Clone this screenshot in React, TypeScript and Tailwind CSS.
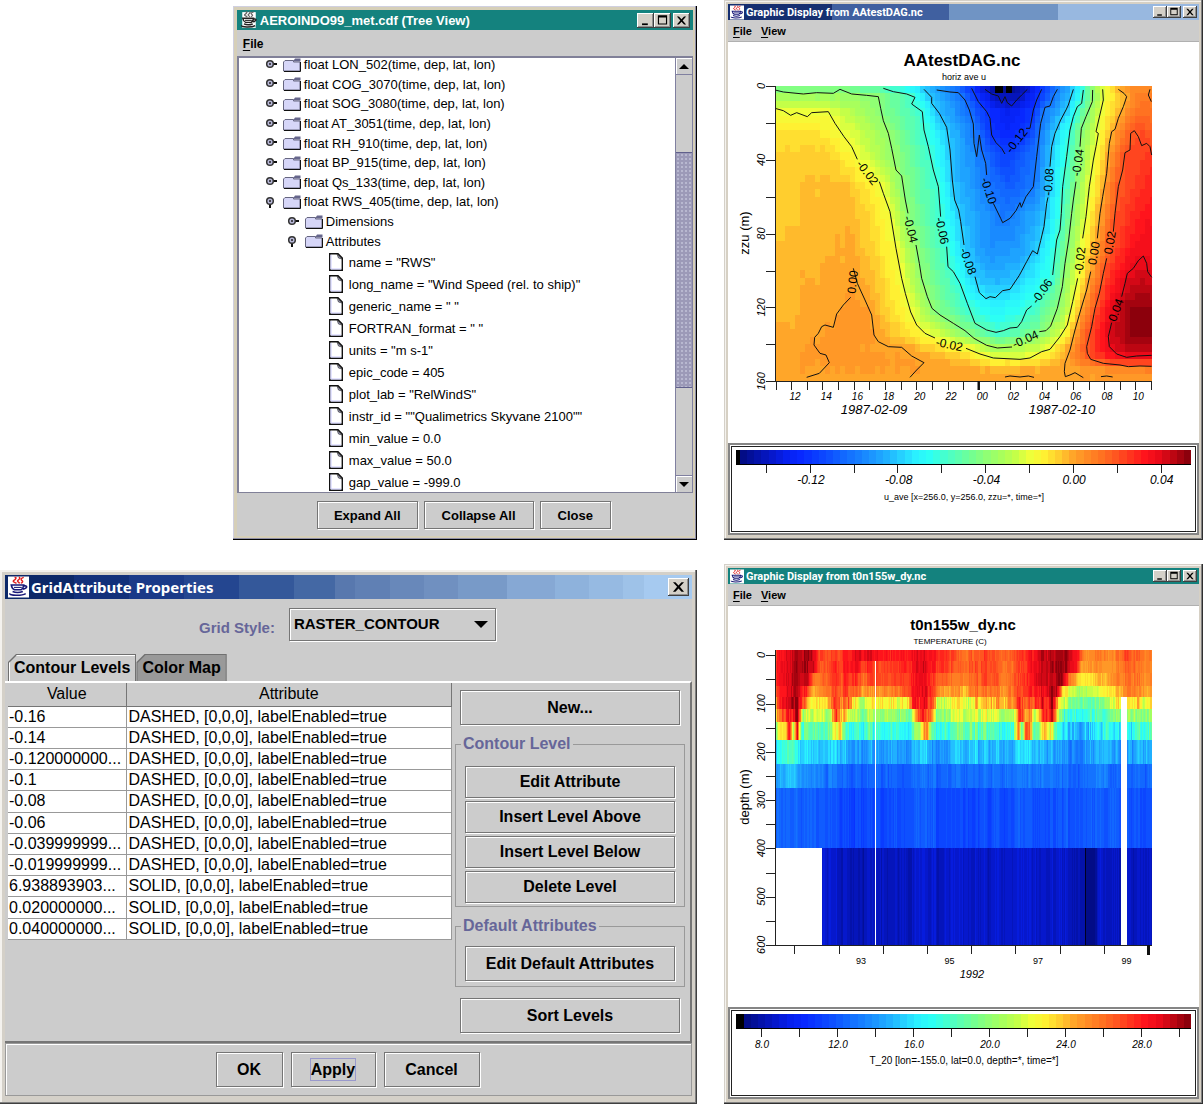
import type { ReactNode } from "react";

type Knot = [number, number];

interface Band {
    top: number,
    bottom: number,
    noise: number,
    knots: Knot[]
}

const BASE_COLORS = [
    "#020c86", "#0412aa", "#0618cc", "#0620ee", "#0828ff", "#0a3cff", "#0e50ff", "#1268ff",
    "#167eff", "#1c96ff", "#20b0ff", "#26d0ff", "#2af0ff", "#2cfff4", "#44ffd0", "#5cffb0",
    "#74ff90", "#90ff74", "#a8ff5c", "#c4ff48", "#eeff3a", "#fff032", "#ffce2e", "#ffa629",
    "#ff8a25", "#ff7221", "#ff5620", "#ff341e", "#ff141c", "#ea0a19", "#bc0612", "#8c000c",
];

function mix(a: string, b: string): string {
    const parts = [1, 3, 5].map((i) => Math.round((parseInt(a.slice(i, i + 2), 16) + parseInt(b.slice(i, i + 2), 16)) / 2));
    return `rgb(${parts.join(",")})`;
}

const PALETTE = BASE_COLORS.flatMap((c, i) => (i < BASE_COLORS.length - 1 ? [c, mix(c, BASE_COLORS[i + 1])] : [c]));

// velocity section: depth of the profile, then [x, u] pairs across it
const VELOCITY: { y: number, knots: Knot[] }[] = [
    { y: 258, knots: [[165, -.047], [360, -.045], [490, -.058], [612, -.08], [700, -.1], [755, -.12], [795, -.14], [820, -.15], [870, -.15], [922, -.14], [965, -.12], [1012, -.1], [1060, -.08], [1090, -.06], [1118, -.04], [1148, -.02], [1195, 0], [1240, .008], [1295, .006]] },
    { y: 290, knots: [[165, -.034], [330, -.034], [475, -.04], [560, -.055], [630, -.08], [725, -.1], [768, -.12], [830, -.14], [855, -.142], [900, -.14], [955, -.12], [1000, -.1], [1050, -.08], [1086, -.06], [1117, -.04], [1152, -.02], [1220, 0], [1260, .012], [1295, .01]] },
    { y: 335, knots: [[165, -.018], [325, -.02], [480, -.04], [607, -.06], [650, -.08], [745, -.1], [800, -.12], [860, -.13], [940, -.12], [970, -.1], [1037, -.08], [1070, -.06], [1105, -.04], [1142, -.02], [1202, 0], [1250, .014], [1295, .012]] },
    { y: 400, knots: [[165, -.011], [290, -.01], [365, -.018], [500, -.036], [615, -.06], [685, -.08], [768, -.1], [815, -.12], [860, -.124], [915, -.12], [958, -.1], [1003, -.08], [1050, -.06], [1083, -.04], [1133, -.02], [1178, 0], [1235, .02], [1270, .022], [1295, .018]] },
    { y: 470, knots: [[165, -.007], [320, -.006], [410, -.018], [525, -.038], [632, -.06], [693, -.08], [790, -.1], [853, -.117], [950, -.1], [992, -.08], [1040, -.06], [1078, -.04], [1121, -.02], [1165, 0], [1213, .022], [1295, .026]] },
    { y: 560, knots: [[165, -.006], [370, -.003], [485, -.018], [550, -.04], [655, -.06], [698, -.08], [808, -.1], [860, -.108], [940, -.1], [987, -.08], [1030, -.06], [1068, -.04], [1108, -.02], [1152, 0], [1195, .02], [1295, .03]] },
    { y: 650, knots: [[165, -.006], [380, -.002], [440, -.008], [512, -.018], [563, -.04], [661, -.06], [721, -.08], [850, -.1], [980, -.08], [1020, -.06], [1055, -.04], [1099, -.02], [1138, 0], [1184, .02], [1270, .034], [1295, .033]] },
    { y: 740, knots: [[165, -.005], [395, -.001], [460, -.008], [530, -.018], [590, -.04], [680, -.06], [735, -.08], [800, -.093], [900, -.09], [950, -.08], [1008, -.06], [1045, -.04], [1085, -.02], [1125, 0], [1170, .02], [1260, .037], [1295, .036]] },
    { y: 830, knots: [[165, -.004], [300, -.001], [400, .001], [480, -.007], [545, -.018], [603, -.038], [705, -.06], [765, -.08], [830, -.086], [900, -.08], [998, -.06], [1030, -.04], [1072, -.02], [1108, 0], [1148, .02], [1215, .04], [1260, .044], [1295, .04]] },
    { y: 930, knots: [[165, -.003], [350, .001], [400, .004], [450, .001], [570, -.018], [640, -.04], [750, -.06], [830, -.07], [930, -.06], [1012, -.04], [1055, -.02], [1085, 0], [1124, .02], [1178, .04], [1230, .052], [1295, .052]] },
    { y: 1000, knots: [[165, -.002], [285, .001], [400, .004], [465, .002], [620, -.018], [740, -.04], [830, -.058], [960, -.042], [1030, -.02], [1060, 0], [1105, .02], [1165, .04], [1230, .052], [1295, .052]] },
    { y: 1040, knots: [[165, -.001], [300, .003], [540, .001], [740, -.018], [835, -.036], [980, -.022], [1045, 0], [1098, .02], [1170, .038], [1220, .048], [1295, .048]] },
    { y: 1075, knots: [[165, 0], [310, .003], [590, .002], [740, -.006], [820, -.018], [930, -.018], [1035, 0], [1110, .02], [1190, .035], [1295, .035]] },
    { y: 1105, knots: [[165, 0], [320, .002], [580, .002], [830, -.003], [1035, 0], [1200, .008], [1295, .01]] },
    { y: 1143, knots: [[165, 0], [1295, .002]] },
];

const CONTOURS = [
    // -0.04
    "165,270 190,276 250,282 290,278 340,280 360,268 395,282 440,286 475,290 482,325 490,362 505,400 515,445 528,510 545,528 556,600 564,640",
    "588,735 598,790 605,835 622,890 636,925 660,945 700,970 735,992 762,1015 800,1036 832,1044 876,1041",
    "958,995 978,992 992,978 1012,925 1027,860 1035,790 1046,720 1055,640 1060,600 1068,545",
    "1080,440 1084,385 1098,350 1117,305 1118,270",
    // -0.02
    "165,325 190,332 212,346 230,338 262,350 275,338 325,335 345,370 372,410 395,440 412,478",
    "478,545 490,580 510,635 528,745 545,835 556,880 572,936 590,975 615,1000 645,1014",
    "738,1045 780,1062 820,1074 900,1078 930,1074 965,1055 990,1048 1020,1010 1042,975 1058,905 1073,835",
    "1088,715 1098,650 1108,560 1120,480 1128,440 1135,400 1128,395 1150,300 1148,268",
    // -0.06
    "490,265 520,275 560,282 585,292 575,312 607,335 612,390 625,440 640,510 655,560 662,650",
    "680,740 684,800 700,815 720,850 742,910 765,970 800,990 828,997 850,992 870,984 892,982 905,965 920,930 935,918",
    "998,825 1003,780 1010,720 1020,690 1024,640 1028,560 1040,470 1050,390 1060,350 1072,320 1085,310 1090,270",
    // -0.08
    "612,268 635,292 635,310 658,340 680,382 690,450 697,540 704,600 716,630 722,665 732,735",
    "765,830 778,878 798,896 810,890 826,893 848,872 870,868 898,826 920,785 938,752 952,762 962,722 972,680 980,610 984,592",
    "990,500 995,440 1005,400 1022,360 1038,330 1045,315 1060,268",
    // -0.10
    "650,270 690,276 715,278 735,300 748,330 760,372 762,430 770,470 778,405 785,450 797,490 800,525",
    "820,610 842,655 848,668 870,655 888,632 900,608 904,622 918,590 940,560 950,470 962,370 975,322 990,318 1000,290 1012,268",
    // -0.12
    "755,265 775,305 800,335 810,355 815,405 828,428 845,445 855,462",
    "918,385 930,385 940,330 950,300 965,268",
    // -0.14
    "795,268 815,282 835,288 845,310 855,290 862,308 875,318 890,300 905,285 922,268",
    // 0.00
    "1195,268 1212,280 1220,290 1210,320 1195,355 1185,388 1175,395 1168,430 1160,520 1148,590 1140,640 1132,715",
    "1112,815 1100,870 1082,930 1065,990 1050,1050 1035,1090 1033,1115 1036,1130 1050,1125 1065,1118 1090,1133",
    "260,1132 298,1120 328,1088 318,1065 300,1060 282,1035 284,1012 295,1000 305,980 315,975 340,982 350,942 370,915 392,892",
    "400,805 412,850 435,900 455,945 462,1005 475,1025 505,1040 545,1042 575,1068 612,1088 590,1110 570,1132",
    "855,1131 870,1128 900,1131 925,1128 942,1132",
    "1143,1130 1160,1128 1178,1131",
    // 0.02
    "1295,465 1290,440 1280,430 1265,437 1255,410 1243,392 1232,400 1230,450 1215,458 1208,510 1195,560 1185,640 1180,695",
    "1160,775 1150,820 1138,880 1125,925 1115,980 1100,1040 1102,1060 1112,1078 1150,1090 1200,1095 1225,1100 1260,1098 1295,1099",
    "1290,268 1285,285 1294,305",
    // 0.04
    "1295,832 1283,815 1280,790 1270,768 1255,782 1240,805 1222,820 1215,850 1205,890",
    "1175,968 1165,1010 1168,1040 1190,1062 1220,1072 1250,1068 1295,1066",
];

const CONTOUR_LABELS: { x: number, y: number, angle: number, text: string }[] = [
    { x: 442, y: 518, angle: 52, text: "-0.02" },
    { x: 890, y: 422, angle: -52, text: "-0.12" },
    { x: 806, y: 572, angle: 72, text: "-0.10" },
    { x: 986, y: 546, angle: -86, text: "-0.08" },
    { x: 1074, y: 488, angle: -82, text: "-0.04" },
    { x: 572, y: 688, angle: 76, text: "-0.04" },
    { x: 666, y: 692, angle: 78, text: "-0.06" },
    { x: 744, y: 784, angle: 70, text: "-0.08" },
    { x: 398, y: 846, angle: -84, text: "0.00" },
    { x: 688, y: 1034, angle: 12, text: "-0.02" },
    { x: 916, y: 1018, angle: -24, text: "-0.04" },
    { x: 966, y: 874, angle: -55, text: "-0.06" },
    { x: 1080, y: 782, angle: -84, text: "-0.02" },
    { x: 1122, y: 760, angle: -80, text: "0.00" },
    { x: 1170, y: 728, angle: -80, text: "0.02" },
    { x: 1188, y: 930, angle: -70, text: "0.04" },
];

const TEMPERATURE: Band[] = [
    { top: 270, bottom: 303, noise: .9, knots: [[165, 27.5], [205, 28.5], [235, 30], [275, 29.5], [300, 27], [350, 27], [405, 29], [440, 28.5], [520, 28], [600, 28.8], [690, 27.5], [720, 26], [800, 27.3], [860, 26.3], [930, 28], [960, 29.5], [1040, 30.2], [1075, 28], [1095, 25.2], [1180, 25.5], [1215, 27], [1295, 25.5]] },
    { top: 303, bottom: 340, noise: .9, knots: [[165, 27.5], [235, 30], [280, 29], [300, 26.5], [340, 27], [405, 28.8], [430, 27.5], [480, 27], [560, 28], [610, 28.7], [680, 27.5], [710, 26], [800, 27.2], [860, 26], [920, 27.5], [960, 29.5], [1035, 30.2], [1070, 28.5], [1085, 24.8], [1180, 25], [1215, 26.5], [1295, 25.3]] },
    { top: 340, bottom: 377, noise: .9, knots: [[165, 27.5], [235, 30], [265, 29], [285, 25.2], [340, 27], [400, 28], [430, 26], [460, 27], [560, 27.5], [610, 28.5], [650, 27], [710, 25.2], [800, 27], [860, 25.8], [920, 27.5], [955, 29.3], [1030, 30], [1045, 26.5], [1075, 23.6], [1095, 22.8], [1160, 24.5], [1215, 26], [1295, 25]] },
    { top: 377, bottom: 411, noise: 1.2, knots: [[165, 27], [235, 30], [260, 27], [280, 23.8], [340, 26.5], [400, 27], [430, 24.5], [520, 25.7], [570, 28], [620, 28.5], [660, 25], [720, 24], [780, 25.8], [860, 25.5], [925, 27.5], [965, 29], [1010, 30], [1030, 23], [1080, 20.8], [1130, 21.6], [1180, 23.5], [1215, 25.8], [1295, 24.6]] },
    { top: 411, bottom: 447, noise: 2, knots: [[165, 25.5], [190, 28], [230, 30], [250, 27], [265, 22], [320, 23], [350, 27], [390, 26], [420, 20.5], [460, 22.8], [560, 23], [580, 28], [635, 27.5], [655, 22], [740, 22], [800, 24.2], [880, 25], [900, 27], [930, 26.5], [960, 28], [1000, 30], [1020, 22], [1060, 19.5], [1130, 19], [1180, 22.5], [1200, 23.5], [1295, 22.8]] },
    { top: 447, bottom: 485, noise: 2.2, knots: [[165, 23.5], [200, 27], [235, 29.5], [250, 20.5], [330, 21], [350, 26.5], [380, 22.6], [420, 19.5], [480, 20.5], [570, 20.5], [600, 26.5], [630, 26], [650, 20], [760, 22], [860, 21], [885, 22], [900, 27.5], [950, 21], [975, 29], [1000, 29], [1020, 19], [1060, 17.5], [1140, 18], [1180, 20], [1295, 20.5]] },
    { top: 485, bottom: 540, noise: 2.2, knots: [[165, 20], [190, 22.5], [210, 27], [220, 20], [232, 28], [245, 18], [330, 18.5], [350, 22], [362, 26], [372, 18], [500, 17], [580, 18], [600, 21], [622, 25], [635, 17.5], [760, 19], [880, 17.5], [897, 26], [905, 18], [920, 28], [945, 18], [975, 25], [1000, 22], [1015, 17], [1050, 15], [1140, 15.5], [1160, 19], [1175, 16], [1295, 18]] },
    { top: 540, bottom: 611, noise: 1.3, knots: [[165, 15.5], [210, 18], [240, 16], [300, 15], [360, 16], [400, 13.8], [620, 15], [640, 13.8], [760, 15.5], [860, 14.5], [920, 16.2], [1000, 14.5], [1080, 13.2], [1160, 15.6], [1200, 14], [1295, 15.2]] },
    { top: 611, bottom: 684, noise: .8, knots: [[165, 14], [215, 15.2], [250, 13.5], [400, 12.3], [600, 12.4], [750, 12.6], [900, 13], [970, 13.2], [1080, 12.4], [1160, 13.5], [1170, 12.3], [1295, 12.8]] },
    { top: 684, bottom: 864, noise: .7, knots: [[165, 12.2], [220, 12.4], [400, 11.2], [620, 12], [700, 11.3], [890, 11.8], [1000, 11.8], [1160, 12.2], [1295, 11.5]] },
    { top: 864, bottom: 1155, noise: .6, knots: [[165, 8.6], [306, 8.9], [420, 8.2], [520, 8.5], [700, 8.7], [1000, 8.8], [1080, 8.4], [1097, 8], [1100, 7.2], [1130, 7.2], [1134, 8.7], [1295, 8.6]] },
];

const VARIABLES = ["LON_502", "COG_3070", "SOG_3080", "AT_3051", "RH_910", "BP_915", "Qs_133"];

const ATTRIBUTES = [
    'name = "RWS"',
    'long_name = "Wind Speed (rel. to ship)"',
    'generic_name = " "',
    'FORTRAN_format = " "',
    'units = "m s-1"',
    "epic_code = 405",
    'plot_lab = "RelWindS"',
    'instr_id = ""Qualimetrics Skyvane 2100""',
    "min_value = 0.0",
    "max_value = 50.0",
    "gap_value = -999.0",
];

const LEVELS = [
    ["-0.16", "DASHED"],
    ["-0.14", "DASHED"],
    ["-0.120000000...", "DASHED"],
    ["-0.1", "DASHED"],
    ["-0.08", "DASHED"],
    ["-0.06", "DASHED"],
    ["-0.039999999...", "DASHED"],
    ["-0.019999999...", "DASHED"],
    ["6.938893903...", "SOLID"],
    ["0.020000000...", "SOLID"],
    ["0.040000000...", "SOLID"],
];

function sample(knots: Knot[], x: number): number {
    for (let i = 1; i < knots.length; i++) {
        const [x0, v0] = knots[i - 1];
        const [x1, v1] = knots[i];
        if (x <= x1) return v0 + (v1 - v0) * Math.max(0, (x - x0) / (x1 - x0));
    }
    return knots[knots.length - 1][1];
}

function jitter(a: number, b: number): number {
    const n = Math.sin(a * 12.9898 + b * 78.233) * 43758.5453;
    return (n - Math.floor(n)) * 2 - 1;
}

function color(value: number, min: number, max: number): string {
    const i = Math.floor(((value - min) / (max - min)) * PALETTE.length);
    return PALETTE[Math.min(PALETTE.length - 1, Math.max(0, i))];
}

// one raster line, with neighbouring cells of the same colour joined
function rasterRow(y: number, height: number, step: number, pick: (x: number) => string): ReactNode[] {
    const cells: ReactNode[] = [];
    let start = 165;
    let fill = pick(165 + step / 2);
    for (let x = 165 + step; x < 1296; x += step) {
        const next = pick(x + step / 2);
        if (next !== fill) {
            cells.push(<rect key={`${y}-${start}`} x={start} y={y} width={x - start} height={height} fill={fill} />);
            start = x;
            fill = next;
        }
    }
    cells.push(<rect key={`${y}-${start}`} x={start} y={y} width={1296 - start} height={height} fill={fill} />);
    return cells;
}

function velocityAt(x: number, y: number): number {
    let i = 1;
    while (i < VELOCITY.length - 1 && VELOCITY[i].y < y) i++;
    const a = VELOCITY[i - 1];
    const b = VELOCITY[i];
    const t = (y - a.y) / (b.y - a.y);
    return sample(a.knots, x) * (1 - t) + sample(b.knots, x) * t;
}

const range = (n: number) => Array.from({ length: n }, (_, i) => i);

const JavaIcon = ({ className }: { className: string }) => (
    <svg viewBox="0 0 16 16" className={className} aria-hidden="true">
        <rect width="16" height="16" fill="#fff" />
        <path d="M5 .8c2-.6 1 1.400-.5 2.200s1 1.600 2 2.200M8.200.5c1.500.2.5 1.600-.6 2.400s.8 1.400 1.200 2.400M12 .7c-2 .6-2.600 1.600-1.400 2.400s.2 1.500-.8 2" fill="none" stroke="#e02020" strokeWidth="1.100" />
        <path d="M2.500 6.500h9.500c-.3 2-1 3-2 3.600H5C3.500 9.500 2.800 8 2.500 6.500zM12 7.300c3-.8 3.200 1.800-.8 2.300M3.500 11.500c2 .8 5.500.8 7.800 0M1.500 12.800c-1 1.800 9 2 12 .2" fill="none" stroke="#181878" strokeWidth="1.200" />
        <path d="M4.500 8.300h6" stroke="#181878" strokeWidth=".8" />
    </svg>
);

const JavaIconDark = ({ className }: { className: string }) => (
    <svg viewBox="0 0 16 16" className={className} aria-hidden="true">
        <rect x="2" y="1" width="12" height="14" fill="#fff" />
        <path d="M5 .8c2-.6 1 1.400-.5 2.200s1 1.600 2 2.200M8.200.5c1.500.2.5 1.600-.6 2.400s.8 1.400 1.200 2.400M12 .7c-2 .6-2.600 1.600-1.400 2.400s.2 1.500-.8 2" fill="none" stroke="#666" strokeWidth="1.100" />
        <path d="M2.500 6.500h9.500c-.3 2-1 3-2 3.600H5C3.500 9.500 2.800 8 2.500 6.500zM12 7.300c3-.8 3.200 1.800-.8 2.300M3.500 11.500c2 .8 5.500.8 7.800 0M1.500 12.800c-1 1.800 9 2 12 .2" fill="none" stroke="#222" strokeWidth="1.300" />
        <path d="M4.500 8.300h6" stroke="#222" />
    </svg>
);

const GLYPHS = {
    Minimize: "M4 9h5v1.500H4z",
    Maximize: "M3 2h8v8H3zM4 4v5h6V4z",
    Close: "M3 3h1.800L7 5.400 9.200 3H11L8 6.400l3 3.600H9.200L7 7.500 4.800 10H3l3-3.600z",
};

const TitleButton = ({ name, className }: { name: keyof typeof GLYPHS, className: string }) => (
    <button
        aria-label={name}
        className={`${className} shrink-0 bg-[#d4d0c8] shadow-[inset_-1px_-1px_0_#404040,inset_1px_1px_0_#fff,inset_-2px_-2px_0_#909090]`}
    >
        <svg viewBox="0 0 14 13" className="h-full w-full" aria-hidden="true">
            <path d={GLYPHS[name]} fillRule="evenodd" />
        </svg>
    </button>
);

const MetalButton = ({ children, className }: { children: ReactNode, className: string }) => (
    <button className={`${className} border border-[#757575] bg-[#ccc] font-bold leading-none shadow-[inset_1px_1px_0_#fff,1px_1px_0_#fff]`}>
        {children}
    </button>
);

const MenuItem = ({ label }: { label: string }) => (
    <button className="leading-none">
        <span className="underline underline-offset-2">{label[0]}</span>{label.slice(1)}
    </button>
);

const FolderIcon = () => (
    <svg width="18" height="14" viewBox="0 0 18 14" aria-hidden="true" className="shrink-0">
        <path d="M.5 4L2 2.500h8.500V4h6.500v9H.5z" fill="#d6d6f8" stroke="#666680" />
        <path d="M10 3.500L12 .5h5.500v3z" fill="#66668c" />
        <path d="M1 13.500h16.500V4" fill="none" stroke="#111" />
    </svg>
);

const Handle = ({ open }: { open?: boolean }) => (
    <svg width="16" height="16" viewBox="0 0 16 16" aria-hidden="true" className="shrink-0">
        <path d={open ? "M7 9v5" : "M9 7h5"} stroke="#111" strokeWidth="2" />
        <circle cx="7" cy="7" r="3.300" fill="#b8b8d8" stroke="#333" strokeWidth="1.500" />
        <circle cx="7" cy="7" r="1" fill="#222" />
    </svg>
);

const DocIcon = () => (
    <svg width="14" height="18" viewBox="0 0 14 18" aria-hidden="true" className="shrink-0">
        <path d="M.7.700H9L13.300 5v12.300H.7z" fill="#fff" stroke="#111" strokeWidth="1.400" />
        <path d="M2 2v14h10" fill="none" stroke="#ccccff" />
        <path d="M8 1l5 5-3.500-1z" fill="#9999bb" stroke="#333" strokeWidth=".7" />
    </svg>
);

const FolderRow = ({ label, open, nested }: { label: string, open?: boolean, nested?: boolean }) => (
    <li className={`${nested ? "pl-[46px]" : "pl-6"} flex items-center whitespace-nowrap leading-none`}>
        <Handle open={open} />
        <span className="ml-1 mr-[3px]"><FolderIcon /></span>
        {label}
    </li>
);

const TreeWindow = () => (
    <section className="ml-auto w-[66.600%] bg-[#d6cfb8] p-1 shadow-[inset_-1px_-1px_0_#000,inset_-2px_-2px_0_#9090a8,inset_1px_1px_0_#d0d0e0]">
        <header className="flex h-5 items-center gap-[2px] bg-[#14827e] px-[3px] text-white">
            <JavaIconDark className="h-[18px] w-[18px] shrink-0" />
            <h2 className="grow whitespace-nowrap text-[13px] font-bold leading-none">AEROINDO99_met.cdf (Tree View)</h2>
            <TitleButton name="Minimize" className="h-[15px] w-[17px]" />
            <TitleButton name="Maximize" className="-ml-[2px] h-[15px] w-[17px]" />
            <TitleButton name="Close" className="h-[15px] w-[17px]" />
        </header>
        <div className="bg-[#ccc]">
            <nav className="flex h-[26px] items-center px-[6px] pt-[2px] text-[12px] font-bold">
                <MenuItem label="File" />
            </nav>
            <div className="flex h-[437px] border-b border-l-2 border-t-2 border-[#808098] bg-white">
                <div className="grow overflow-hidden text-[13px]">
                    <ul className="-mt-[3px] grid h-[196px] grid-rows-10">
                        {VARIABLES.map((v) => <FolderRow key={v} label={`float ${v}(time, dep, lat, lon)`} />)}
                        <FolderRow open label="float RWS_405(time, dep, lat, lon)" />
                        <FolderRow nested label="Dimensions" />
                        <FolderRow nested open label="Attributes" />
                    </ul>
                    <ul>
                        {ATTRIBUTES.map((a) => (
                            <li key={a} className="flex h-[22px] items-center gap-[6px] whitespace-nowrap pl-[90px] leading-none">
                                <DocIcon />
                                {a}
                            </li>
                        ))}
                    </ul>
                </div>
                <div className="flex w-[18px] shrink-0 flex-col border-x border-[#8080a0] bg-[#ccc]">
                    <button aria-label="Scroll up" className="flex h-[17px] items-center justify-center border-b border-[#8080a0] shadow-[inset_1px_1px_0_#fff]">
                        <svg width="10" height="5" viewBox="0 0 10 5" aria-hidden="true"><path d="M0 5L5 0l5 5z" /></svg>
                    </button>
                    <div className="mt-[77px] h-[236px] border-y border-[#60608c] bg-[#9c9ab8] bg-[radial-gradient(#b8b8d0_1px,transparent_1px)] bg-[size:4px_4px]" />
                    <button aria-label="Scroll down" className="mt-auto flex h-[17px] items-center justify-center border-t border-[#8080a0] shadow-[inset_1px_1px_0_#fff]">
                        <svg width="10" height="5" viewBox="0 0 10 5" aria-hidden="true"><path d="M0 0l5 5 5-5z" /></svg>
                    </button>
                </div>
            </div>
            <footer className="flex justify-center gap-[6px] pb-[7px] pr-[2px] pt-2 text-[13px]">
                <MetalButton className="h-7 px-4">Expand All</MetalButton>
                <MetalButton className="h-7 px-[17px]">Collapse All</MetalButton>
                <MetalButton className="h-7 px-[17px]">Close</MetalButton>
            </footer>
        </div>
    </section>
);

const Tab = ({ label, active }: { label: string, active?: boolean }) => (
    <button
        role="tab"
        aria-selected={!!active}
        className="h-[27px] bg-[#707070] pl-px pr-px pt-px [clip-path:polygon(8px_0,100%_0,100%_100%,0_100%,0_8px)]"
    >
        <span className={`${active ? "bg-[#ccc] shadow-[inset_1px_1px_0_#fff]" : "bg-[#999]"} flex h-full items-center px-[5px] leading-none [clip-path:polygon(8px_0,100%_0,100%_100%,0_100%,0_8px)]`}>
            {label}
        </span>
    </button>
);

const Group = ({ title, children }: { title: string, children: ReactNode }) => (
    <fieldset className="border border-[#999] px-[9px] pb-[3px]">
        <legend className="-ml-1 px-[2px] leading-5 text-[#666699]">{title}</legend>
        {children}
    </fieldset>
);

const PropertiesDialog = () => (
    <section className="bg-[#d4d0c8] px-[5px] pb-2 pt-[5px] shadow-[inset_-1px_-1px_0_#404040,inset_-2px_-2px_0_#808080,inset_2px_2px_0_#f4f2ee]">
        <header className="flex h-6 items-center gap-[2px] bg-[linear-gradient(90deg,#0c2868_0_10%,#12307a_10%_18%,#1a3a88_18%_26%,#244690_26%_34%,#34589a_34%_42%,#4468a4_42%_48%,#5878ae_48%_51%,#6080b4_51%_56%,#6888ba_56%_61%,#7090c0_61%_66%,#789ac8_66%_73%,#86a8d4_73%_80%,#8eb2dc_80%_85%,#96bae2_85%_90%,#9ec2e8_90%_93%,#a6caf0_93%)] px-[3px] text-white">
            <JavaIcon className="h-[22px] w-[21px] shrink-0" />
            <h2 className="grow font-['Noto_Sans'] text-[15px] font-bold leading-none">GridAttribute Properties</h2>
            <TitleButton name="Close" className="h-[18px] w-[21px]" />
        </header>
        <div className="bg-[#ccc] pt-[9px] text-[16px]">
            <div className="flex items-center justify-center gap-[14px] pr-[2px]">
                <label htmlFor="grid-style" className="pt-2 text-[15px] font-bold text-[#666699]">Grid Style:</label>
                <div className="relative">
                    <select id="grid-style" className="h-[33px] w-[207px] appearance-none border border-[#757575] bg-[#ccc] pl-1 text-[15px] font-bold shadow-[inset_1px_1px_0_#fff,1px_1px_0_#fff]">
                        <option>RASTER_CONTOUR</option>
                    </select>
                    <svg width="14" height="7" viewBox="0 0 14 7" className="pointer-events-none absolute right-[8px] top-[13px]" aria-hidden="true"><path d="M0 0l7 7 7-7z" /></svg>
                </div>
            </div>
            <div role="tablist" className="mt-[13px] flex px-[3px] font-bold">
                <Tab active label="Contour Levels" />
                <Tab label="Color Map" />
            </div>
            <div className="flex h-[362px] border-b-2 border-r-2 border-t-2 border-b-[#757575] border-r-[#757575] border-t-white pl-[3px]">
                <div className="grow">
                    <table className="h-[257px] w-full table-fixed border-collapse whitespace-nowrap leading-none">
                        <thead>
                            <tr className="h-[23px] border-b border-[#757575]">
                                <th className="w-[118px] border-r border-[#757575] font-normal">Value</th>
                                <th className="border-r border-[#757575] font-normal">Attribute</th>
                            </tr>
                        </thead>
                        <tbody className="bg-white">
                            {LEVELS.map(([value, style]) => (
                                <tr key={value} className="border-b border-[#999]">
                                    <td className="border-r border-[#999] pl-px">{value}</td>
                                    <td className="border-r border-[#999] pl-[2px]">{style}, [0,0,0], labelEnabled=true</td>
                                </tr>
                            ))}
                        </tbody>
                    </table>
                </div>
                <div className="flex w-[238px] shrink-0 flex-col pl-[3px] pr-[5px] pt-[7px] font-bold">
                    <MetalButton className="mx-[5px] h-[35px]">New...</MetalButton>
                    <div className="mt-[9px]">
                        <Group title="Contour Level">
                            <div className="flex flex-col gap-[3px] pt-3">
                                <MetalButton className="h-8">Edit Attribute</MetalButton>
                                <MetalButton className="h-8">Insert Level Above</MetalButton>
                                <MetalButton className="h-8">Insert Level Below</MetalButton>
                                <MetalButton className="h-8">Delete Level</MetalButton>
                            </div>
                        </Group>
                    </div>
                    <div className="mt-[9px]">
                        <Group title="Default Attributes">
                            <div className="flex flex-col pb-[2px] pt-[10px]">
                                <MetalButton className="h-[35px]">Edit Default Attributes</MetalButton>
                            </div>
                        </Group>
                    </div>
                    <MetalButton className="mx-[5px] mt-[11px] h-[35px]">Sort Levels</MetalButton>
                </div>
            </div>
            <footer className="flex justify-center gap-2 border border-[#999] py-[8px] pr-[2px] shadow-[inset_1px_1px_0_#fff]">
                <MetalButton className="h-[35px] w-[67px]">OK</MetalButton>
                <MetalButton className="h-[35px] w-[85px]"><span className="border border-[#99c] py-[2px]">Apply</span></MetalButton>
                <MetalButton className="h-[35px] w-24">Cancel</MetalButton>
            </footer>
        </div>
    </section>
);

interface AxesProps {
    yTicks: number[],
    xTicks: number[],
    yLabels: { at: number, text: string }[],
    yTitle: string
}

const Axes = ({ yTicks, xTicks, yLabels, yTitle }: AxesProps) => (
    <>
        <path d="M47 44V339H424" fill="none" stroke="#222" shapeRendering="crispEdges" />
        <path d={yTicks.map((y) => `M38 ${y}H47`).join("") + xTicks.map((x) => `M${x} 339V348`).join("")} stroke="#222" shapeRendering="crispEdges" />
        {yLabels.map(({ at, text }) => (
            <text key={text} transform={`translate(37 ${at}) rotate(-90)`} textAnchor="middle" fontSize="11" fontStyle="italic">{text}</text>
        ))}
        <text transform="translate(21 191) rotate(-90)" textAnchor="middle" fontSize="13">{yTitle}</text>
    </>
);

const VelocityPlot = () => (
    <svg viewBox="0 0 471 401" className="block w-full bg-white" role="img" aria-label="AAtestDAG.nc">
        <text x="234" y="24" textAnchor="middle" fontSize="17" fontWeight="bold">AAtestDAG.nc</text>
        <text x="236" y="38" textAnchor="middle" fontSize="9">horiz ave u</text>
        <g transform="translate(-8 -42) scale(.33333)">
            <g shapeRendering="crispEdges">
                {range(40).map((r) => {
                    const y = 258 + Math.round(r * 22.125);
                    const h = 258 + Math.round((r + 1) * 22.125) - y;
                    return rasterRow(y, h, 15, (x) => color(velocityAt(x, y + h / 2) + jitter(x, 1) * .0006 + jitter(x, r) * .0004, -.1516, .054));
                })}
                <path d="M825 258h24v20h-24zM858 258h18v20h-18z" fill="#000" />
            </g>
            {CONTOURS.map((points) => <polyline key={points} points={points} fill="none" stroke="#111" strokeWidth="3" />)}
        </g>
        {CONTOUR_LABELS.map(({ x, y, angle, text }) => (
            <text key={`${x}-${y}`} transform={`translate(${x / 3 - 8} ${y / 3 - 42}) rotate(${angle})`} textAnchor="middle" dy="4" fontSize="12">{text}</text>
        ))}
        <Axes
            yTicks={range(9).map((i) => Math.round(44 + i * 36.9))}
            xTicks={range(25).map((i) => Math.round(47.5 + i * 15.65))}
            yLabels={range(5).map((i) => ({ at: 44 + i * 73.8, text: `${i * 40}` }))}
            yTitle="zzu (m)"
        />
        <path d="M250.500 339v9" stroke="#111" strokeWidth="2" />
        {["12", "14", "16", "18", "20", "22", "00", "02", "04", "06", "08", "10"].map((hour, i) => (
            <text key={hour} x={67 + i * 31.200} y="358" textAnchor="middle" fontSize="10" fontStyle="italic">{hour}</text>
        ))}
        <text x="146" y="372" textAnchor="middle" fontSize="13" fontStyle="italic">1987-02-09</text>
        <text x="334" y="372" textAnchor="middle" fontSize="13" fontStyle="italic">1987-02-10</text>
    </svg>
);

const TemperaturePlot = () => (
    <svg viewBox="0 0 471 401" className="block w-full bg-white" role="img" aria-label="t0n155w_dy.nc">
        <text x="235" y="24" textAnchor="middle" fontSize="15" fontWeight="bold">t0n155w_dy.nc</text>
        <text x="222" y="38" textAnchor="middle" fontSize="8">TEMPERATURE (C)</text>
        <g transform="translate(-8 -46) scale(.33333)" shapeRendering="crispEdges">
            {TEMPERATURE.map(({ top, bottom, noise, knots }, r) => (
                rasterRow(top, bottom - top, 3, (x) => {
                    const wide = jitter(Math.floor(x / 9), 5) * .5 + jitter(Math.floor(x / 12), r) * .3;
                    return color(sample(knots, x) + (wide + jitter(x, r) * .4) * noise, 7.1, 30.6);
                })
            ))}
            <path d="M165 864h141v291H165zM465 303h3v852h-3zM1203 411h18v744h-18z" fill="#fff" />
            <path d="M1095 864h3v291h-3z" fill="#000020" />
        </g>
        <Axes
            yTicks={range(13).map((i) => Math.round(49.300 + i * 24.140))}
            xTicks={range(9).map((i) => Math.round(66.300 + i * 44.200))}
            yLabels={range(7).map((i) => ({ at: 49 + i * 48.300, text: `${i * 100}` }))}
            yTitle="depth (m)"
        />
        <path d="M420.500 339v10" stroke="#111" strokeWidth="3" />
        {["93", "95", "97", "99"].map((year, i) => (
            <text key={year} x={133 + i * 88.500} y="358" textAnchor="middle" fontSize="9">{year}</text>
        ))}
        <text x="244" y="372" textAnchor="middle" fontSize="11" fontStyle="italic">1992</text>
    </svg>
);

interface ColorKeyProps {
    under: number,
    ticks: number[],
    labels: { x: number, text: string }[],
    labelSize: number,
    caption: string,
    captionSize: number
}

const ColorKey = ({ under, ticks, labels, labelSize, caption, captionSize }: ColorKeyProps) => {
    const step = (455 - under) / PALETTE.length;
    return (
        <div className="border-2 border-[#858585] bg-white p-px">
            <svg viewBox="0 0 463 84" className="block w-full border border-[#222]" role="img" aria-label={caption}>
                <rect x="4" y="3" width="455" height="15" fill="#000" />
                <g shapeRendering="crispEdges">
                    {PALETTE.map((fill, i) => <rect key={fill} x={4 + under + i * step} y="3" width={step} height="14" fill={fill} />)}
                </g>
                <path d={ticks.map((x) => `M${Math.round(x) + .5} 18v8`).join("")} stroke="#222" />
                {labels.map(({ x, text }) => (
                    <text key={text} x={x} y="37" textAnchor="middle" fontSize={labelSize} fontStyle="italic">{text}</text>
                ))}
                <text x="232" y="53" textAnchor="middle" fontSize={captionSize}>{caption}</text>
            </svg>
        </div>
    );
};

interface GraphicWindowProps {
    file: string,
    bar: string,
    children: ReactNode
}

const GraphicWindow = ({ file, bar, children }: GraphicWindowProps) => (
    <section className="bg-[#d6d0c4] px-1 pb-[5px] pt-1 shadow-[inset_-1px_-1px_0_#303030,inset_-2px_-2px_0_#808080,inset_1px_1px_0_#d4d0c8,inset_2px_2px_0_#f4f2ee]">
        <header className={`${bar} flex h-4 items-center gap-[2px] pl-[2px] pr-[2px] text-white`}>
            <JavaIcon className="h-[15px] w-[14px] shrink-0" />
            <h2 className="grow whitespace-nowrap font-['Roboto'] text-[11px] font-bold leading-none">Graphic Display from {file}</h2>
            <TitleButton name="Minimize" className="h-3 w-[14px]" />
            <TitleButton name="Maximize" className="-ml-[2px] h-3 w-[14px]" />
            <TitleButton name="Close" className="h-3 w-[14px]" />
        </header>
        <nav className="flex h-[22px] items-center gap-[9px] border-b border-[#b0b0b0] bg-[#ccc] px-[5px] pt-[2px] text-[11px] font-bold">
            <MenuItem label="File" />
            <MenuItem label="View" />
        </nav>
        {children}
    </section>
);

export default function App() {
    return (
        <main className="grid grid-cols-[697fr_479fr] gap-x-[27px] bg-white font-['Liberation_Sans',Arial,sans-serif] text-black">
            <div className="flex min-w-0 flex-col gap-[30px] pt-[6px]">
                <TreeWindow />
                <PropertiesDialog />
            </div>
            <div className="flex min-w-0 flex-col gap-6">
                <GraphicWindow
                    file="AAtestDAG.nc"
                    bar="bg-[linear-gradient(90deg,#162f70_0_22%,#4060a0_22%_47%,#7094c4_47%_70%,#98b8e0_70%)]"
                >
                    <VelocityPlot />
                    <ColorKey
                        under={4}
                        ticks={range(10).map((i) => 33.700 + i * 43.900)}
                        labels={["-0.12", "-0.08", "-0.04", "0.00", "0.04"].map((text, i) => ({ x: 79 + i * 87.700, text }))}
                        labelSize={12}
                        caption="u_ave [x=256.0, y=256.0, zzu=*, time=*]"
                        captionSize={9}
                    />
                </GraphicWindow>
                <GraphicWindow file="t0n155w_dy.nc" bar="bg-[#14827e]">
                    <TemperaturePlot />
                    <ColorKey
                        under={8}
                        ticks={range(12).map((i) => 29 + i * 38)}
                        labels={["8.0", "12.0", "16.0", "20.0", "24.0", "28.0"].map((text, i) => ({ x: 30 + i * 76, text }))}
                        labelSize={10}
                        caption="T_20 [lon=-155.0, lat=0.0, depth=*, time=*]"
                        captionSize={10}
                    />
                </GraphicWindow>
            </div>
        </main>
    );
}
